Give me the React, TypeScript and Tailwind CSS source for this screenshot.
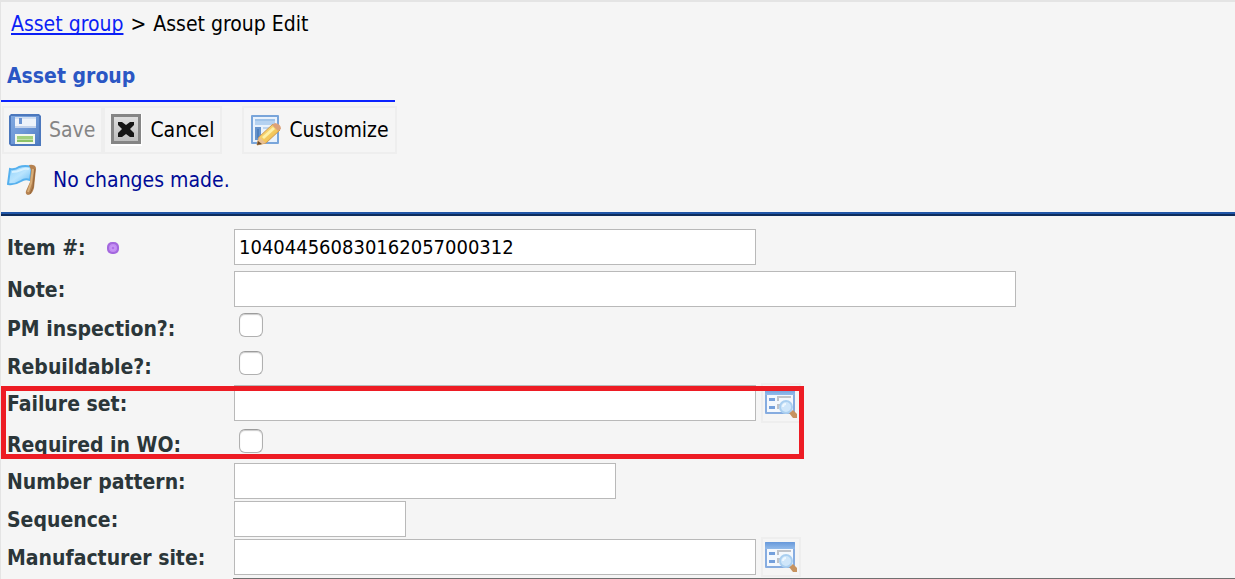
import type { ReactNode } from "react";

function SaveIcon() {
  return (
    <svg width="32" height="32" viewBox="0 0 32 32" aria-hidden="true">
      <defs>
        <linearGradient id="saveBody" x1="0" y1="0" x2="1" y2="1">
          <stop offset="0" stopColor="#7fa8e0" />
          <stop offset="0.5" stopColor="#6e98d6" />
          <stop offset="1" stopColor="#4f7cc4" />
        </linearGradient>
      </defs>
      <path d="M2 0H30L32 2V32H2L0 30V2Z" fill="#4c78bd" />
      <rect x="2" y="2" width="28" height="28" fill="url(#saveBody)" />
      <rect x="6" y="3" width="21" height="10" fill="#eef3fa" />
      <rect x="6" y="3" width="21" height="2" fill="#d3e0f2" />
      <rect x="10" y="4" width="3" height="6" fill="#6a93d2" />
      <rect x="6" y="12" width="21" height="2" fill="#c3d3ec" />
      <rect x="6" y="20" width="20" height="10" fill="#f3f8ee" />
      <rect x="8" y="22" width="16" height="3" fill="#a3d17e" />
      <rect x="8" y="25" width="16" height="1" fill="#c3e2aa" />
      <rect x="8" y="26" width="16" height="2" fill="#8cc266" />
    </svg>
  );
}

function CancelIcon() {
  return (
    <svg width="32" height="32" viewBox="0 0 32 32" aria-hidden="true">
      <defs>
        <linearGradient id="cancelFace" x1="0" y1="0" x2="0" y2="1">
          <stop offset="0" stopColor="#dedede" />
          <stop offset="1" stopColor="#bdbdbd" />
        </linearGradient>
      </defs>
      <rect x="1" width="31" height="32" fill="#fff" />
      <rect x="1" width="30" height="30" fill="#858585" />
      <rect x="4" y="3" width="24" height="24" fill="url(#cancelFace)" />
      <path
        d="M8 8H12L16 11L20 8H24V11L20 15L24 19V23H20L16 20L12 23H8V19L12 15L8 11Z"
        fill="#161616"
      />
    </svg>
  );
}

function CustomizeIcon() {
  return (
    <svg width="32" height="32" viewBox="0 0 32 32" aria-hidden="true">
      <defs>
        <linearGradient id="pencil" x1="0" y1="0" x2="1" y2="1">
          <stop offset="0" stopColor="#fbe48b" />
          <stop offset="0.6" stopColor="#f3c65a" />
          <stop offset="1" stopColor="#d99337" />
        </linearGradient>
      </defs>
      <rect x="2" y="1" width="28" height="29" rx="1" fill="#79a5da" />
      <rect x="4" y="3" width="24" height="25" fill="#e9f2fc" />
      <rect x="6" y="5" width="20" height="6" fill="#b5d2f1" />
      <rect x="6" y="5" width="20" height="2" fill="#9fc3e9" />
      <rect x="6" y="13" width="6" height="13" fill="#6693cc" />
      <rect x="8" y="15" width="2" height="9" fill="#4f80bd" />
      <rect x="14" y="13" width="12" height="2" fill="#bdd5ef" />
      <path d="M8 31L10 23L24 10L31 16L17 29Z" fill="url(#pencil)" stroke="#cf9a52" strokeWidth="1" />
      <path d="M23 11L26 9Q32 10 32 15L29 17Z" fill="#dca27a" />
      <path d="M10 23L17 29L8 31Z" fill="#e9c092" />
      <path d="M8 31L9 27L13 30Z" fill="#6e4b2a" />
      <path d="M14 24L25 14" stroke="#fdf0a8" strokeWidth="3" />
    </svg>
  );
}

function FlagIcon() {
  return (
    <svg width="32" height="32" viewBox="0 0 32 32" aria-hidden="true">
      <defs>
        <linearGradient id="flagCloth" x1="0" y1="0" x2="1" y2="1">
          <stop offset="0" stopColor="#8fd2fb" />
          <stop offset="0.5" stopColor="#b9e4fe" />
          <stop offset="1" stopColor="#63b8f3" />
        </linearGradient>
      </defs>
      <path
        d="M3 5Q8 6 12 3Q18 1 25 3L23 16Q18 14 14 17Q8 21 1 20Z"
        fill="url(#flagCloth)"
        stroke="#55b0ee"
        strokeWidth="2"
      />
      <path d="M5 8Q10 8 14 6Q18 4 22 5" fill="none" stroke="#d5f0ff" strokeWidth="2" />
      <path d="M22 1Q28 0 29 4L27 24Q25 31 21 31Q18 30 19 27L23 18L24 6Z" fill="#b58250" />
      <path d="M26 5L24 19L21 28" fill="none" stroke="#d9ae78" strokeWidth="2" />
      <path d="M28 5L26 23L23 30" fill="none" stroke="#94653a" strokeWidth="1" />
    </svg>
  );
}

function LookupIcon() {
  return (
    <svg width="32" height="32" viewBox="0 0 32 32" aria-hidden="true">
      <defs>
        <linearGradient id="lookupBar" x1="0" y1="0" x2="0" y2="1">
          <stop offset="0" stopColor="#6698da" />
          <stop offset="1" stopColor="#93bbea" />
        </linearGradient>
      </defs>
      <rect x="0" y="1" width="30" height="26" rx="1" fill="#86ace0" />
      <rect x="0" y="1" width="30" height="7" rx="1" fill="url(#lookupBar)" />
      <rect x="2" y="8" width="26" height="17" fill="#f4f8fd" />
      <rect x="4" y="11" width="6" height="3" fill="#75a0dc" />
      <rect x="4" y="19" width="6" height="3" fill="#75a0dc" />
      <path d="M13 14V10H26" fill="none" stroke="#c0c3c9" strokeWidth="2" />
      <path d="M13 22V18H18" fill="none" stroke="#c0c3c9" strokeWidth="2" />
      <path d="M24 26L28 23L32 27V31H28Z" fill="#c7935f" />
      <circle cx="21" cy="20" r="6" fill="#cfe6fa" stroke="#aacff0" strokeWidth="2" />
      <path d="M18 20Q18 17 21 17" fill="none" stroke="#eef8ff" strokeWidth="2" />
    </svg>
  );
}

function RequiredMark() {
  return (
    <svg width="14" height="14" viewBox="0 0 14 14" role="img" aria-label="Required">
      <rect x="1" y="1" width="12" height="12" rx="5" fill="#a468de" />
      <circle cx="7" cy="7" r="4" fill="#c38df3" />
      <circle cx="7" cy="7" r="2" fill="#b071ea" stroke="#cf9ff8" strokeWidth="1" />
    </svg>
  );
}

const toolButton =
  "flex h-12 shrink-0 items-center gap-2 border-2 border-[#eeeeee] pr-[6px] pl-[5px] text-black disabled:text-[#858585]";

function Field({
  id,
  label,
  className,
  mark,
  children,
}: {
  id: string;
  label: string;
  className: string;
  mark?: boolean;
  children: ReactNode;
}) {
  return (
    <div className={`flex ${className}`}>
      <div className="flex w-[227px] shrink-0 items-center gap-5 pt-px font-bold text-[#2b3639]">
        <label htmlFor={id} className="whitespace-nowrap">
          {label}
        </label>
        {mark && <RequiredMark />}
      </div>
      {children}
    </div>
  );
}

function TextBox({ id, width, value }: { id: string; width: string; value?: string }) {
  return (
    <input
      id={id}
      type="text"
      defaultValue={value}
      className={`h-9 min-w-0 self-center border border-[#b9b9b9] bg-white px-1 text-[20px] text-black outline-none ${width}`}
    />
  );
}

function CheckBox({ id }: { id: string }) {
  return (
    <input
      id={id}
      type="checkbox"
      className="mt-[3px] ml-[5px] size-6 appearance-none rounded-md border border-[#b0b0b0] border-t-[#9c9c9c] bg-white shadow-[inset_0_1px_1px_#cccccc] checked:bg-[#2b57c4]"
    />
  );
}

function LookupButton({ label }: { label: string }) {
  return (
    <button
      type="button"
      aria-label={label}
      className="ml-[5px] flex h-10 w-10 shrink-0 items-center justify-center self-center border-2 border-[#eeeeee]"
    >
      <LookupIcon />
    </button>
  );
}

export default function App() {
  return (
    <main className="min-h-screen overflow-hidden border-t-2 border-l border-[#e4e4e4] bg-[#f5f5f5] font-['DejaVu_Sans_Condensed','DejaVu_Sans',sans-serif] text-[21px] leading-6">
      <nav className="flex h-11 items-center gap-[7px] pl-[10px]" aria-label="Breadcrumb">
        <a
          href="#asset-group"
          className="text-[#0b1ff5] underline decoration-2 underline-offset-2 [text-decoration-skip-ink:none]"
        >
          Asset group
        </a>
        <span>&gt;</span>
        <span>Asset group Edit</span>
      </nav>

      <header>
        <div className="w-[394px] border-b-2 border-[#0a22ff] pt-[18px] pb-3 pl-[6px]">
          <h1 className="font-bold text-[#2b57c4]">Asset group</h1>
        </div>
        <div className="flex pt-1 pl-px">
          <button type="button" disabled className={toolButton}>
            <SaveIcon />
            Save
          </button>
          <button type="button" className={toolButton}>
            <CancelIcon />
            Cancel
          </button>
          <button type="button" className={`ml-5 ${toolButton}`}>
            <CustomizeIcon />
            Customize
          </button>
        </div>
        <div className="flex h-[58px] items-center gap-[14px] pb-[6px] pl-[6px] text-[#000b96]">
          <FlagIcon />
          <p>No changes made.</p>
        </div>
        <div className="h-1 border-t-2 border-[#2056a8] bg-[#0e2c5c]" />
      </header>

      <form className="pt-[10px] pl-[6px]">
        <Field id="item" label="Item #:" mark className="h-[42px]">
          <TextBox id="item" width="w-[522px]" value="104044560830162057000312" />
        </Field>
        <Field id="note" label="Note:" className="h-[42px]">
          <TextBox id="note" width="w-[782px]" />
        </Field>
        <Field id="inspection" label="PM inspection?:" className="h-9">
          <CheckBox id="inspection" />
        </Field>
        <Field id="rebuildable" label="Rebuildable?:" className="h-[38px] pt-[2px]">
          <CheckBox id="rebuildable" />
        </Field>
        <div className="relative">
          <Field id="failure" label="Failure set:" className="h-[38px]">
            <TextBox id="failure" width="w-[522px]" />
            <LookupButton label="Find failure set" />
          </Field>
          <Field id="required" label="Required in WO:" className="h-10 pt-1">
            <CheckBox id="required" />
          </Field>
          <div className="pointer-events-none absolute top-[2px] -left-[6px] h-[73px] w-[803px] border-5 border-[#ed1c24]" />
        </div>
        <Field id="pattern" label="Number pattern:" className="h-[38px]">
          <TextBox id="pattern" width="w-[382px]" />
        </Field>
        <Field id="sequence" label="Sequence:" className="h-[38px]">
          <TextBox id="sequence" width="w-[172px]" />
        </Field>
        <Field id="manufacturer" label="Manufacturer site:" className="h-[38px]">
          <TextBox id="manufacturer" width="w-[522px]" />
          <LookupButton label="Find manufacturer site" />
        </Field>
        <div className="mt-[2px] ml-[226px] h-px bg-[#707070]" />
      </form>
    </main>
  );
}
